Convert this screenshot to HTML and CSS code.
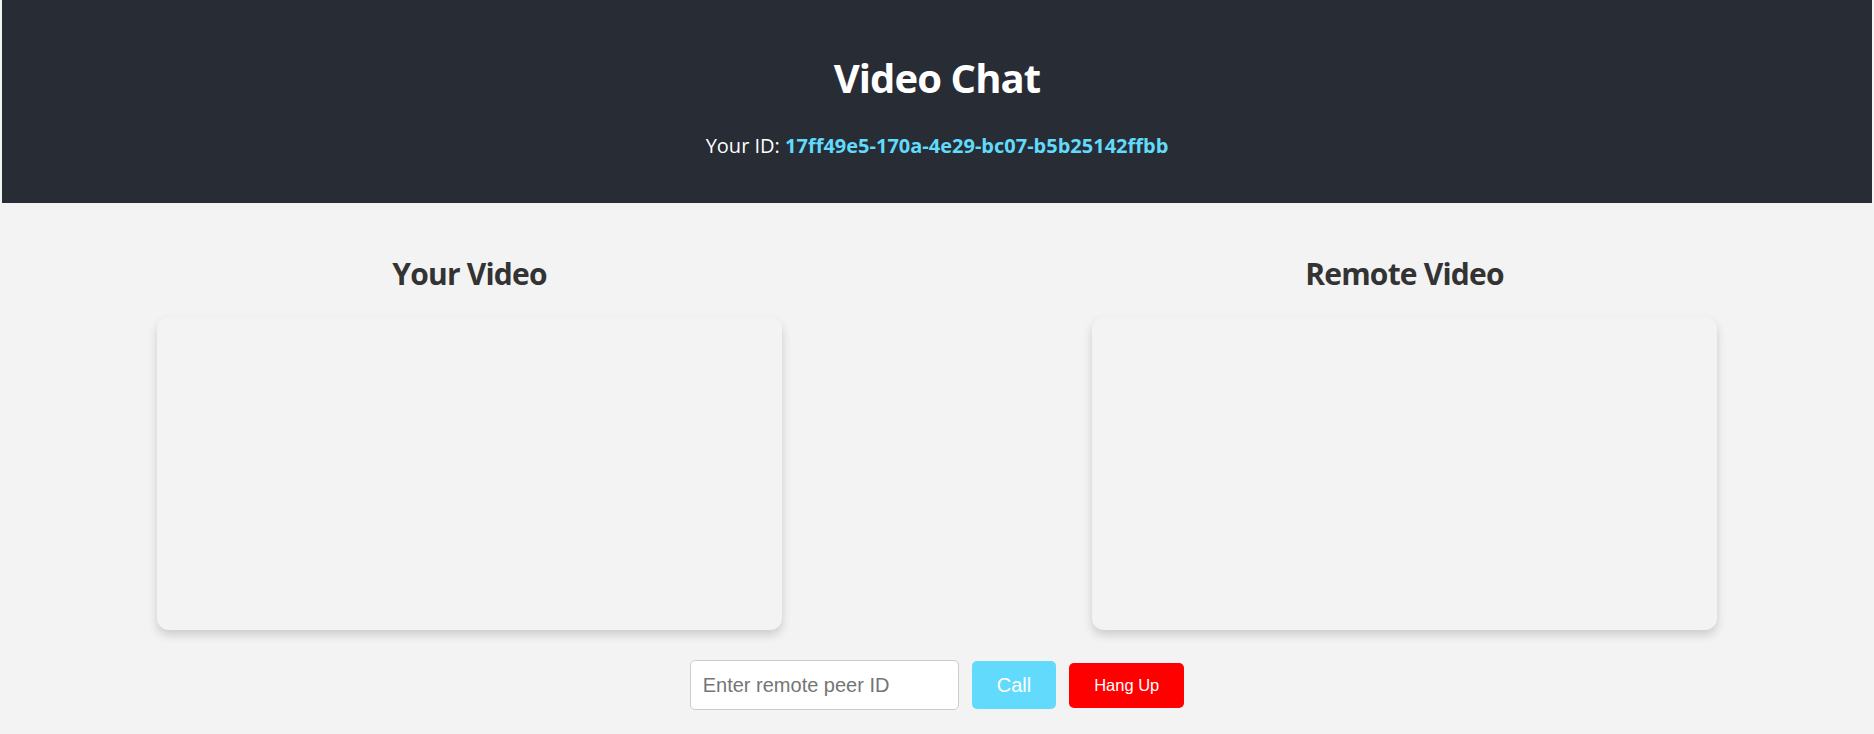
FILE: index.html
```html
<!DOCTYPE html>
<html lang="en">
<head>
<meta charset="utf-8">
<title>Video Chat</title>
<link rel="stylesheet" href="styles.css">
</head>
<body>
<div class="app">
  <header class="app-header">
    <h1 class="title">Video Chat</h1>
    <p class="my-id">Your ID: <span class="id-value">17ff49e5-170a-4e29-bc07-b5b25142ffbb</span></p>
  </header>
  <main class="videos">
    <section class="video-col">
      <h2 class="video-title">Your Video</h2>
      <div class="video-box"></div>
    </section>
    <section class="video-col">
      <h2 class="video-title">Remote Video</h2>
      <div class="video-box"></div>
    </section>
  </main>
  <div class="controls">
    <input class="peer-input" type="text" placeholder="Enter remote peer ID">
    <button class="btn btn-call">Call</button>
    <button class="btn btn-hangup">Hang Up</button>
  </div>
</div>
</body>
</html>
```

FILE: styles.css
```css
html, body {
  margin: 0;
  padding: 0;
}

body {
  background: #f3f3f3;
  font-family: "Open Sans", "Noto Sans", sans-serif;
  overflow: hidden;
}

.app {
  padding: 0 2px;
}

.app-header {
  background: #282c34;
  color: #ffffff;
  text-align: center;
  padding: 54px 0 43px;
}

.title {
  margin: 0;
  font-size: 40px;
  line-height: 48px;
  font-weight: 700;
  letter-spacing: -0.9px;
}

.my-id {
  margin: 30px 0 0;
  font-size: 20px;
  line-height: 28px;
}

.id-value {
  color: #61dafb;
  font-weight: 700;
}

.videos {
  display: flex;
  justify-content: space-around;
  padding-top: 53px;
}

.video-col {
  width: 625px;
  display: flex;
  flex-direction: column;
  align-items: center;
}

.video-title {
  margin: 0;
  font-size: 30px;
  line-height: 36px;
  font-weight: 700;
  color: #333333;
  letter-spacing: -0.8px;
}

.video-box {
  margin-top: 25px;
  width: 625px;
  height: 313px;
  background: #f3f3f3;
  border-radius: 12px;
  box-shadow: 0 5px 10px rgba(0, 0, 0, 0.16);
}

.controls {
  display: flex;
  justify-content: center;
  align-items: center;
  gap: 13px;
  margin-top: 30px;
}

.peer-input {
  box-sizing: border-box;
  width: 269px;
  height: 50px;
  padding: 0 12px;
  border: 1px solid #cccccc;
  border-radius: 5px;
  background: #ffffff;
  font-family: "Liberation Sans", Arial, sans-serif;
  font-size: 20px;
  color: #333333;
  outline: none;
}

.peer-input::placeholder {
  color: #757575;
}

.btn {
  border: none;
  border-radius: 5px;
  color: #ffffff;
  font-family: "Liberation Sans", Arial, sans-serif;
  padding: 0 25px;
  cursor: pointer;
}

.btn-call {
  background: #61dafb;
  font-size: 20px;
  height: 48px;
}

.btn-hangup {
  background: #ff0000;
  font-size: 16.5px;
  height: 45px;
}
```
